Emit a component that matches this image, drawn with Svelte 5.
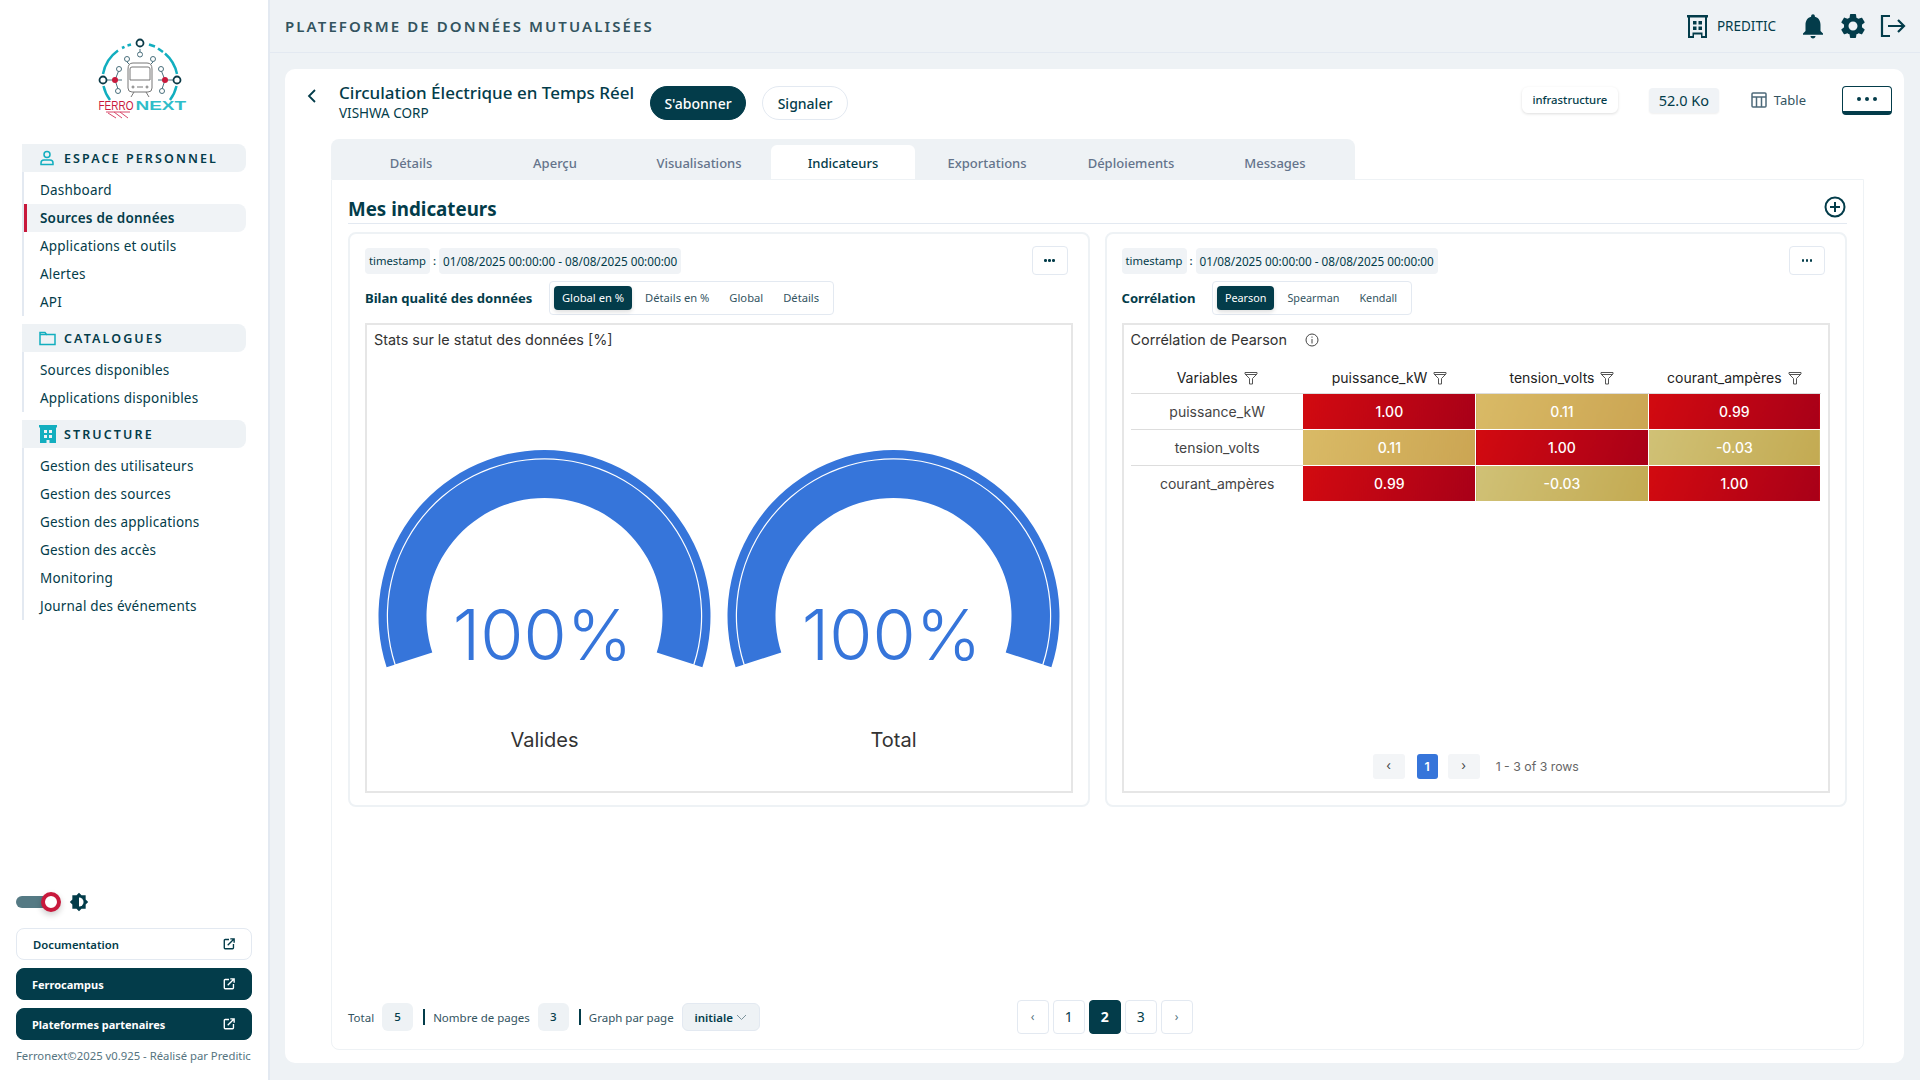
<script>
  const sections = [
    { title: 'ESPACE PERSONNEL', icon: 'user', items: ['Dashboard', 'Sources de données', 'Applications et outils', 'Alertes', 'API'] },
    { title: 'CATALOGUES', icon: 'folder', items: ['Sources disponibles', 'Applications disponibles'] },
    { title: 'STRUCTURE', icon: 'building', items: ['Gestion des utilisateurs', 'Gestion des sources', 'Gestion des applications', 'Gestion des accès', 'Monitoring', 'Journal des événements'] }
  ];
  const tabs = ['Détails', 'Aperçu', 'Visualisations', 'Indicateurs', 'Exportations', 'Déploiements', 'Messages'];
  const vars = ['puissance_kW', 'tension_volts', 'courant_ampères'];
  const rows = [
    ['puissance_kW', ['1.00', 'hot'], ['0.11', 'warm'], ['0.99', 'hot']],
    ['tension_volts', ['0.11', 'warm'], ['1.00', 'hot'], ['-0.03', 'mild']],
    ['courant_ampères', ['0.99', 'hot'], ['-0.03', 'mild'], ['1.00', 'hot']]
  ];
  const gauges = ['Valides', 'Total'];

  // annular sector going over the top, ends 18deg under the horizontal
  function sector(r0, r1) {
    const c = Math.cos((18 * Math.PI) / 180);
    const s = Math.sin((18 * Math.PI) / 180);
    const cx = 174.5;
    const cy = 195;
    return `M${cx - r1 * c} ${cy + r1 * s}A${r1} ${r1} 0 1 1 ${cx + r1 * c} ${cy + r1 * s}L${cx + r0 * c} ${cy + r0 * s}A${r0} ${r0} 0 1 0 ${cx - r0 * c} ${cy + r0 * s}Z`;
  }
</script>

{#snippet external()}
  <svg width="12" height="12" viewBox="0 0 14 14" fill="none" stroke="currentColor" stroke-width="1.600">
    <path d="M7 1.800H2.500a1 1 0 0 0-1 1v8.700a1 1 0 0 0 1 1h8.700a1 1 0 0 0 1-1V7" />
    <path d="M5.500 8.500 12.500 1.500M8.500 1h4.500v4.500" />
  </svg>
{/snippet}

{#snippet funnel()}
  <svg class="funnel" width="14" height="14" viewBox="0 0 14 14" fill="none" stroke="#555" stroke-width="1">
    <path d="M1 1.500h12v1.500L8.500 7.500v5.500h-3V7.500L1 3z" />
    <path d="M1.500 3.500h11" />
  </svg>
{/snippet}

{#snippet dots()}
  <button class="dots"><i></i><i></i><i></i></button>
{/snippet}

{#snippet range()}
  <span class="chip">timestamp</span><b>:</b><span class="chip date">01/08/2025 00:00:00 - 08/08/2025 00:00:00</span>
{/snippet}

<div class="page">
  <aside class="sidebar">
    <div class="logo">
      <svg width="100" height="90" viewBox="90 35 100 90" fill="none">
        <g stroke="#12aebf" stroke-width="2.500">
          <path d="M110 100A37 37 0 0 1 103.500 86" />
          <path d="M103 74A37 37 0 0 1 118 50.500" />
          <path d="M122 48 124.500 46.800" />
          <path d="M127.500 45.500 131 44.500" />
          <path d="M149 44.500 155 46.500" />
          <path d="M158 48.500 163 52" />
          <path d="M165 53.500A37 37 0 0 1 177 74" />
          <path d="M176.500 86A37 37 0 0 1 170 100" />
        </g>
        <g stroke="#4a6f7c" stroke-width="1">
          <path d="M140 49v3M127 62l3 3M153 62l-3 3M107 80h15M158 80h15M115 80l4-10M165 80l-4-10M115 80l3 9M165 80l-3 9" />
          <circle cx="140" cy="54.500" r="2.500" fill="#fff" />
          <circle cx="127" cy="59" r="2.500" fill="#fff" />
          <circle cx="153" cy="59" r="2.500" fill="#fff" />
          <circle cx="119" cy="69" r="2.500" fill="#fff" />
          <circle cx="161" cy="69" r="2.500" fill="#fff" />
          <circle cx="118" cy="91" r="2.500" fill="#fff" />
          <circle cx="162" cy="91" r="2.500" fill="#fff" />
        </g>
        <g stroke="#0b3a47" stroke-width="1.800" fill="#fff">
          <circle cx="140" cy="43" r="3.500" />
          <circle cx="103" cy="80" r="3.500" />
          <circle cx="177" cy="80" r="3.500" />
        </g>
        <circle cx="115" cy="80" r="3" fill="#c8193c" />
        <circle cx="165" cy="80" r="3" fill="#c8193c" />
        <g stroke="#777" stroke-width="1">
          <path d="M133 63h14q5 0 5 6v19q0 4-4 4h-16q-4 0-4-4V69q0-6 5-6z" fill="#fff" />
          <path d="M132 67h16q2 0 2 2v11h-20V69q0-2 2-2z" />
          <path d="M134 92l-3 5M146 92l3 5M137 87h6" />
          <circle cx="133" cy="87" r="1" />
          <circle cx="147" cy="87" r="1" />
        </g>
        <text transform="translate(98.500 110) scale(1 1.250)" class="logo-red">FERRO</text>
        <text transform="translate(135.500 110) scale(1 .66)" class="logo-teal">NEXT</text>
        <path d="M106 112h24M108 113l8 5M114 112l8 6M120 112l8 6" stroke="#d8486a" stroke-width="1" />
      </svg>
    </div>

    <nav>
      {#each sections as section}
        <div class="nav-title">
          <span class="nav-icon">
            {#if section.icon === 'user'}
              <svg width="16" height="16" viewBox="0 0 16 16" fill="none" stroke="currentColor" stroke-width="1.500"><circle cx="8" cy="4.500" r="3" /><path d="M2 13q0-3 3-3h6q3 0 3 3v1.500H2z" /></svg>
            {:else if section.icon === 'folder'}
              <svg width="17" height="15" viewBox="0 0 17 15" fill="none" stroke="currentColor" stroke-width="1.500"><path d="M1 13.500V1.500h5l1.500 2h8.500v10z" /><path d="M1 3.500h6.500" /></svg>
            {:else}
              <svg width="18" height="18" viewBox="0 0 18 18">
                <path fill="currentColor" d="M0 0h18v2.500h-1V18H1V2.500H0z" />
                <path fill="#eef2f5" d="M5 5h3v3H5zM10 5h3v3h-3zM5 10h3v3H5zM10 10h3v3h-3zM7.500 15h3v3h-3z" />
              </svg>
            {/if}
          </span>
          {section.title}
        </div>
        <ul>
          {#each section.items as item}
            <li class:active={item === 'Sources de données'}>{item}</li>
          {/each}
        </ul>
      {/each}
    </nav>

    <div class="side-bottom">
      <div class="theme">
        <span class="switch"><span class="knob"></span></span>
        <svg width="20" height="20" viewBox="0 0 24 24" fill="#033c4a">
          <path d="M12 1l3 3h5v5l3 3-3 3v5h-5l-3 3-3-3H4v-5l-3-3 3-3V4h5z" />
          <path d="M12 6.500a5.500 5.500 0 0 1 0 11z" fill="#fff" />
        </svg>
      </div>
      <div class="link">Documentation {@render external()}</div>
      <div class="link dark">Ferrocampus {@render external()}</div>
      <div class="link dark">Plateformes partenaires {@render external()}</div>
      <div class="copy">Ferronext©2025 v0.925 - Réalisé par Preditic</div>
    </div>
  </aside>

  <main>
    <header>
      <div class="brand">PLATEFORME DE DONNÉES MUTUALISÉES</div>
      <div class="org">
        <svg width="21" height="23" viewBox="0 0 21 23" fill="currentColor">
          <path fill-rule="evenodd" d="M0 0h21v2.500h-1V23h-6v-3.500H7V23H1V2.500H0zM3 2.500V21h2.500v-3.500h10V21H18V2.500z" />
          <path d="M6 6h3.500v3.500H6zM11.500 6H15v3.500h-3.500zM6 11.500h3.500V15H6zM11.500 11.500H15V15h-3.500z" />
        </svg>
        <span>PREDITIC</span>
      </div>
      <svg class="bell" width="30" height="30" viewBox="0 0 24 24" fill="currentColor"><path d="M12 22c1.100 0 2-.9 2-2h-4c0 1.100.9 2 2 2zm6-6v-5c0-3.070-1.630-5.640-4.500-6.320V4c0-.83-.67-1.500-1.500-1.500s-1.500.67-1.500 1.500v.68C7.640 5.360 6 7.920 6 11v5l-2 2v1h16v-1l-2-2z" /></svg>
      <svg class="gear" width="30" height="30" viewBox="0 0 24 24" fill="currentColor"><path d="M19.140 12.940c.04-.3.06-.61.06-.94 0-.32-.02-.64-.07-.94l2.030-1.580c.18-.14.23-.41.12-.61l-1.920-3.320c-.12-.22-.37-.29-.59-.22l-2.390.96c-.5-.38-1.030-.7-1.620-.94l-.36-2.540c-.04-.24-.24-.41-.48-.41h-3.840c-.24 0-.43.17-.47.41l-.36 2.540c-.59.24-1.130.57-1.620.94l-2.390-.96c-.22-.08-.47 0-.59.22L2.740 8.870c-.12.21-.08.47.12.61l2.030 1.580c-.05.3-.09.63-.09.94s.02.64.07.94l-2.030 1.580c-.18.14-.23.41-.12.61l1.920 3.320c.12.22.37.29.59.22l2.390-.96c.5.38 1.030.7 1.620.94l.36 2.540c.05.24.24.41.48.41h3.840c.24 0 .44-.17.47-.41l.36-2.540c.59-.24 1.130-.56 1.620-.94l2.390.96c.22.08.47 0 .59-.22l1.920-3.320c.12-.22.07-.47-.12-.61l-2.010-1.580zM12 15.600c-1.980 0-3.600-1.620-3.600-3.600s1.620-3.600 3.600-3.600 3.600 1.620 3.600 3.600-1.620 3.600-3.600 3.600z" /></svg>
      <svg width="26" height="24" viewBox="0 0 26 24" fill="none" stroke="currentColor" stroke-width="2.200"><path d="M10 2H2v20h8" /><path d="M8 12h16M18 6l6 6-6 6" /></svg>
    </header>

    <section class="content">
      <div class="top-row">
        <svg class="back" width="10" height="14" viewBox="0 0 10 14" fill="none" stroke="#033c4a" stroke-width="1.800"><path d="M8 1 2 7l6 6" /></svg>
        <div class="heading">
          <h1>Circulation Électrique en Temps Réel</h1>
          <p>VISHWA CORP</p>
        </div>
        <button class="pill solid">S'abonner</button>
        <button class="pill">Signaler</button>
        <span class="tag">infrastructure</span>
        <span class="size">52.0 Ko</span>
        <span class="type">
          <svg width="16" height="16" viewBox="0 0 16 16" fill="none" stroke="#4d6a7a" stroke-width="1.500"><rect x="1" y="1" width="14" height="14" rx="1" /><path d="M1 5h14M5.500 5v10M10.500 5v10" /></svg>
          Table
        </span>
        <button class="more"><i></i><i></i><i></i></button>
      </div>

      <div class="tabs">
        {#each tabs as tab}
          <div class="tab" class:current={tab === 'Indicateurs'}>{tab}</div>
        {/each}
      </div>

      <div class="panel">
        <div class="panel-title">
          <h2>Mes indicateurs</h2>
          <svg width="22" height="22" viewBox="0 0 22 22" fill="none" stroke="#033c4a" stroke-width="2"><circle cx="11" cy="11" r="9.500" /><path d="M11 6v10M6 11h10" /></svg>
        </div>

        <div class="cards">
          <div class="card">
            <div class="filters">
              {@render range()}
              {@render dots()}
            </div>
            <div class="controls">
              <strong>Bilan qualité des données</strong>
              <div class="segments">
                <span class="on">Global en %</span><span>Détails en %</span><span>Global</span><span>Détails</span>
              </div>
            </div>
            <div class="box">
              <div class="box-title">Stats sur le statut des données [%]</div>
              <div class="gauges">
                {#each gauges as label}
                  <svg width="349" height="360" viewBox="0 0 349 360">
                    <path d={sector(157.700, 166)} fill="#3675da" />
                    <path d={sector(118, 156.500)} fill="#3675da" />
                    <text x="172.500" y="239" class="gauge-value">100%</text>
                    <text x="174.500" y="326" class="gauge-label">{label}</text>
                  </svg>
                {/each}
              </div>
            </div>
          </div>

          <div class="card">
            <div class="filters">
              {@render range()}
              {@render dots()}
            </div>
            <div class="controls">
              <strong>Corrélation</strong>
              <div class="segments tight">
                <span class="on">Pearson</span><span>Spearman</span><span>Kendall</span>
              </div>
            </div>
            <div class="box">
              <div class="box-title">
                Corrélation de Pearson
                <svg width="14" height="14" viewBox="0 0 14 14" fill="none" stroke="#444" stroke-width="1"><circle cx="7" cy="7" r="6" /><path d="M7 6v4.500M7 3.500v1.200" /></svg>
              </div>
              <table>
                <thead>
                  <tr>
                    <th>Variables {@render funnel()}</th>
                    {#each vars as v}
                      <th>{v} {@render funnel()}</th>
                    {/each}
                  </tr>
                </thead>
                <tbody>
                  {#each rows as row}
                    <tr>
                      <td class="name">{row[0]}</td>
                      {#each row.slice(1) as cell}
                        <td class={cell[1]}>{cell[0]}</td>
                      {/each}
                    </tr>
                  {/each}
                </tbody>
              </table>
              <div class="table-pager">
                <span class="pg">‹</span>
                <span class="pg blue">1</span>
                <span class="pg">›</span>
                <em>1 - 3 of 3 rows</em>
              </div>
            </div>
          </div>
        </div>

        <div class="foot">
          <span>Total</span><span class="count">5</span><i class="sep"></i>
          <span>Nombre de pages</span><span class="count">3</span><i class="sep"></i>
          <span>Graph par page</span>
          <span class="select">initiale
            <svg width="11" height="7" viewBox="0 0 11 7" fill="none" stroke="#7c939c" stroke-width="1"><path d="M1 1l4.500 4.500L10 1" /></svg>
          </span>
          <div class="pager">
            <span class="arrow">‹</span><span>1</span><span class="sel">2</span><span>3</span><span class="arrow">›</span>
          </div>
        </div>
      </div>
    </section>
  </main>
</div>

<style>
  :global(body) {
    margin: 0;
    font-family: "Noto Sans", sans-serif;
    color: #033c4a;
  }

  .page {
    display: flex;
    width: 1920px;
    height: 1080px;
    overflow: hidden;
    background: #eef2f5;
  }

  /* sidebar */
  .sidebar {
    width: 268px;
    flex: none;
    background: #fff;
    border-right: 2px solid #e3e9f1;
    display: flex;
    flex-direction: column;
  }

  .logo {
    height: 144px;
    padding: 35px 0 0 90px;
    box-sizing: border-box;
  }

  .logo-red {
    font: 400 10px "Liberation Sans", sans-serif;
    fill: #c8193c;
  }

  .logo-teal {
    font: 700 19px "Liberation Sans", sans-serif;
    fill: #2fbdc9;
  }

  nav {
    margin-left: 22px;
    width: 224px;
  }

  .nav-title {
    height: 28px;
    display: flex;
    align-items: center;
    background: #eef2f5;
    border-radius: 0 8px 8px 0;
    font-size: 12.500px;
    font-weight: 600;
    letter-spacing: 2.100px;
    padding-left: 17px;
    box-sizing: border-box;
  }

  .nav-icon {
    width: 25px;
    display: flex;
    color: #12aebf;
  }

  nav ul {
    list-style: none;
    margin: 0 0 8px;
    padding: 4px 0 0;
    border-left: 2px solid #e3e9f1;
  }

  nav li {
    height: 28px;
    line-height: 28px;
    font-size: 13.500px;
    padding-left: 16px;
    letter-spacing: 0.200px;
    border-radius: 0 8px 8px 0;
  }

  nav li.active {
    background: #f0f3f6;
    border-left: 3px solid #c8193c;
    padding-left: 13px;
    font-weight: 600;
  }

  .side-bottom {
    margin-top: auto;
    padding: 0 16px 17px;
  }

  .theme {
    display: flex;
    align-items: center;
    gap: 8px;
    margin-bottom: 14px;
    height: 24px;
  }

  .switch {
    position: relative;
    width: 36px;
    height: 12px;
    border-radius: 6px;
    background: #557a84;
    margin-right: 9px;
  }

  .knob {
    position: absolute;
    right: -9px;
    top: -4px;
    width: 12px;
    height: 12px;
    border: 4px solid #c8193c;
    border-radius: 50%;
    background: #fff;
    box-shadow: 0 3px 6px #0003;
  }

  .link {
    display: flex;
    justify-content: space-between;
    align-items: center;
    height: 32px;
    box-sizing: border-box;
    margin-bottom: 8px;
    padding: 0 16px 0 16px;
    border: 1px solid #e3e9f1;
    border-radius: 8px;
    font-size: 11.300px;
    font-weight: 600;
  }

  .link.dark {
    background: #033c4a;
    border-color: #033c4a;
    color: #fff;
    font-size: 11px;
    font-weight: 700;
    padding-left: 15px;
  }

  .copy {
    font-size: 11.300px;
    color: #557480;
    white-space: nowrap;
    margin-top: 8px;
  }

  /* main */
  main {
    flex: 1;
    min-width: 0;
    display: flex;
    flex-direction: column;
  }

  header {
    height: 53px;
    box-sizing: border-box;
    flex: none;
    display: flex;
    align-items: center;
    padding: 0 14px 0 15px;
    border-bottom: 1px solid #e3e9f1;
  }

  .brand {
    font-size: 15px;
    font-weight: 600;
    letter-spacing: 2.100px;
    color: #33545f;
    margin-right: auto;
  }

  .org {
    display: flex;
    align-items: center;
    gap: 9px;
    font-size: 13.500px;
    margin-right: 22px;
  }

  .bell { margin-right: 10px; }
  .gear { margin-right: 12px; }

  .content {
    margin: 16px 16px 0 15px;
    height: 994px;
    flex: none;
    box-sizing: border-box;
    background: #fff;
    border-radius: 10px;
    padding-top: 17px;
    display: flex;
    flex-direction: column;
  }

  .top-row {
    height: 34px;
    display: flex;
    align-items: center;
    padding: 0 12px 0 22px;
    margin-bottom: 19px;
  }

  .back { margin-right: 22px; margin-top: -14px; }

  .heading { margin-right: 16px; width: 295px; white-space: nowrap; }

  h1 {
    margin: -4px 0 1px;
    font-size: 17px;
    font-weight: 500;
    line-height: 22px;
  }

  .heading p {
    margin: 0;
    font-size: 13.500px;
    line-height: 16px;
  }

  .pill {
    height: 34px;
    border-radius: 17px;
    border: 1px solid #e3e9f1;
    background: #fff;
    font: 500 14px "Noto Sans", sans-serif;
    color: #033c4a;
    padding: 0;
    width: 86px;
    margin-right: auto;
  }

  .pill.solid {
    width: 96px;
    background: #033c4a;
    border-color: #033c4a;
    color: #fff;
    margin-right: 16px;
  }

  .tag {
    height: 26px;
    line-height: 26px;
    width: 96px;
    text-align: center;
    font-size: 11.300px;
    font-weight: 500;
    border-radius: 6px;
    box-shadow: 0 1px 3px #0002;
    margin: 0 31px 6px 0;
  }

  .size {
    height: 25px;
    line-height: 25px;
    width: 70px;
    text-align: center;
    font-size: 14.500px;
    border-radius: 4px;
    background: #f0f3f6;
    box-shadow: 0 1px 2px #0001;
    margin: 0 32px 6px 0;
  }

  .type {
    display: flex;
    align-items: center;
    gap: 7px;
    font-size: 13px;
    color: #33545f;
    margin: 0 36px 6px 0;
  }

  .more {
    width: 50px;
    height: 29px;
    box-sizing: border-box;
    display: flex;
    align-items: center;
    justify-content: center;
    gap: 4px;
    background: #fff;
    border: 1px solid #033c4a;
    border-bottom-width: 4px;
    border-radius: 4px;
    padding: 0;
    margin-bottom: 5px;
  }

  .more i {
    width: 4px;
    height: 4px;
    border-radius: 50%;
    background: #033c4a;
  }

  .tabs {
    width: 1024px;
    height: 40px;
    box-sizing: border-box;
    margin-left: 46px;
    padding: 6px 0 0 8px;
    display: flex;
    background: #eef2f5;
    border-radius: 8px 8px 0 0;
  }

  .tab {
    width: 144px;
    text-align: center;
    font-size: 13px;
    font-weight: 500;
    line-height: 36px;
    color: #64748b;
    border-radius: 6px 6px 0 0;
  }

  .tab.current {
    background: #fff;
    color: #033c4a;
  }

  .panel {
    width: 1533px;
    height: 871px;
    margin-left: 46px;
    box-sizing: border-box;
    border: 1px solid #eef2f5;
    border-radius: 0 0 8px 8px;
    padding: 0 16px;
    display: flex;
    flex-direction: column;
  }

  .panel-title {
    height: 44px;
    box-sizing: border-box;
    display: flex;
    align-items: center;
    justify-content: space-between;
    border-bottom: 1px solid #e3e9f1;
    padding: 9px 1px 0 0;
  }

  .panel-title svg { margin-top: 2px; }

  h2 {
    margin: 7px 0 0;
    font-size: 18.750px;
    font-weight: 700;
    line-height: 1;
  }

  .cards {
    display: grid;
    grid-template-columns: 741.500px 742.500px;
    gap: 15px;
    margin-top: 8px;
  }

  .card {
    height: 575px;
    box-sizing: border-box;
    border: 2px solid #eef2f5;
    border-radius: 8px;
    padding: 12px 15px 0;
    display: flex;
    flex-direction: column;
  }

  .filters {
    height: 29px;
    display: flex;
    align-items: center;
    font-size: 11.250px;
  }

  .filters b {
    width: 9px;
    text-align: center;
    font-weight: 500;
  }

  .chip {
    height: 26px;
    line-height: 26px;
    background: #f0f3f6;
    border-radius: 4px;
    padding: 0 4px;
  }

  .chip.date { font-size: 11.750px; }

  .dots {
    margin-left: auto;
    margin-right: 5px;
    width: 36px;
    height: 29px;
    box-sizing: border-box;
    display: flex;
    align-items: center;
    justify-content: center;
    gap: 1.500px;
    border: 1px solid #e3e9f1;
    border-radius: 4px;
    background: #fff;
    padding: 0;
  }

  .dots i {
    width: 2.500px;
    height: 2.500px;
    border-radius: 50%;
    background: #033c4a;
  }

  .controls {
    display: flex;
    align-items: center;
    height: 34px;
    margin-top: 6px;
    gap: 16.500px;
  }

  .controls strong {
    font-size: 13.100px;
    font-weight: 700;
  }

  .segments {
    height: 34px;
    box-sizing: border-box;
    display: flex;
    align-items: center;
    border: 1px solid #e3e9f1;
    border-radius: 4px;
    padding: 0 4px;
    font-size: 11.200px;
  }

  .segments.tight { font-size: 10.800px; }

  .segments span {
    padding: 0 10px;
    line-height: 24px;
    color: #33545f;
  }

  .segments .on {
    padding: 0 8px;
    background: #033c4a;
    color: #fff;
    border-radius: 4px;
    box-shadow: 0 2px 4px #0002;
    margin-right: 3px;
  }

  .box {
    flex: none;
    height: 470px;
    margin-top: 8px;
    box-sizing: border-box;
    border: 2px solid #e6e6e6;
    display: flex;
    flex-direction: column;
    font-family: Inter, sans-serif;
    color: #333;
  }

  .box-title {
    padding: 5px 7px 0;
    height: 20px;
    line-height: 20px;
    font-size: 14.400px;
    display: flex;
    align-items: center;
    gap: 18px;
  }

  .gauges {
    display: flex;
    margin: 70.500px 0 0 2.500px;
  }

  .gauges svg { flex: none; }

  .gauge-value {
    font: 300 70px Inter, sans-serif;
    fill: #3675da;
    text-anchor: middle;
  }

  .gauge-label {
    font: 400 20px Inter, sans-serif;
    fill: #333;
    text-anchor: middle;
  }

  table {
    width: 690px;
    margin: 10px 0 0 7.500px;
    border-collapse: collapse;
    table-layout: fixed;
    font-size: 14px;
  }

  th {
    height: 33px;
    font-weight: 400;
    color: #222;
    border-bottom: 1px solid #ddd;
    white-space: nowrap;
    padding: 3px 0 0;
    box-sizing: border-box;
  }

  .funnel { vertical-align: -2px; margin-left: 2px; }

  td {
    height: 36px;
    padding: 0;
    text-align: center;
    box-sizing: border-box;
    color: #fff;
    font-weight: 500;
    border-right: 1px solid #fff;
    border-bottom: 1px solid #fff;
  }

  td.name {
    color: #444;
    font-weight: 400;
    border-right: 0;
    border-bottom: 1px solid #ddd;
  }

  tr:last-child td.name { border-bottom: 0; }

  .hot { background: linear-gradient(110deg, #d20a10, #a80018); }
  .warm { background: linear-gradient(110deg, #d9ba66, #cba553); }
  .mild { background: linear-gradient(110deg, #d0c176, #c3aa52); }

  .table-pager {
    margin-top: auto;
    padding-bottom: 12px;
    display: flex;
    justify-content: center;
    align-items: center;
    font-size: 12.300px;
  }

  .pg {
    width: 32px;
    height: 25px;
    line-height: 23px;
    text-align: center;
    box-sizing: border-box;
    background: #f3f5f7;
    border-radius: 3px;
    color: #444;
    margin-right: 12px;
  }

  .pg.blue {
    width: 21px;
    background: #3675da;
    color: #fff;
    font-weight: 600;
    line-height: 25px;
    margin-right: 10px;
  }

  .table-pager em {
    font-style: normal;
    color: #666;
    margin-left: 4px;
  }

  .foot {
    margin-top: auto;
    height: 34px;
    margin-bottom: 15px;
    display: flex;
    align-items: center;
    font-size: 11.500px;
    color: #33545f;
  }

  .count {
    width: 31px;
    height: 28px;
    line-height: 28px;
    text-align: center;
    background: #eef2f5;
    border-radius: 6px;
    margin: 0 10px 0 8px;
    color: #033c4a;
    font-weight: 500;
  }

  .sep {
    width: 2px;
    height: 16px;
    background: #033c4a;
    margin-right: 8px;
  }

  .select {
    margin-left: 8px;
    width: 78px;
    height: 28px;
    box-sizing: border-box;
    display: flex;
    align-items: center;
    justify-content: center;
    gap: 3px;
    background: #eef2f5;
    border: 1px solid #e3e9f1;
    border-radius: 6px;
    font-weight: 600;
    color: #033c4a;
  }

  .pager {
    margin-left: 257px;
    display: flex;
    gap: 4px;
  }

  .pager span {
    width: 32px;
    height: 34px;
    line-height: 32px;
    box-sizing: border-box;
    text-align: center;
    border: 1px solid #e3e9f1;
    border-radius: 4px;
    font-size: 14px;
    color: #033c4a;
  }

  .pager .arrow {
    font-size: 12px;
    color: #557480;
  }

  .pager .sel {
    background: #033c4a;
    border-color: #033c4a;
    color: #fff;
    font-weight: 700;
  }
</style>
